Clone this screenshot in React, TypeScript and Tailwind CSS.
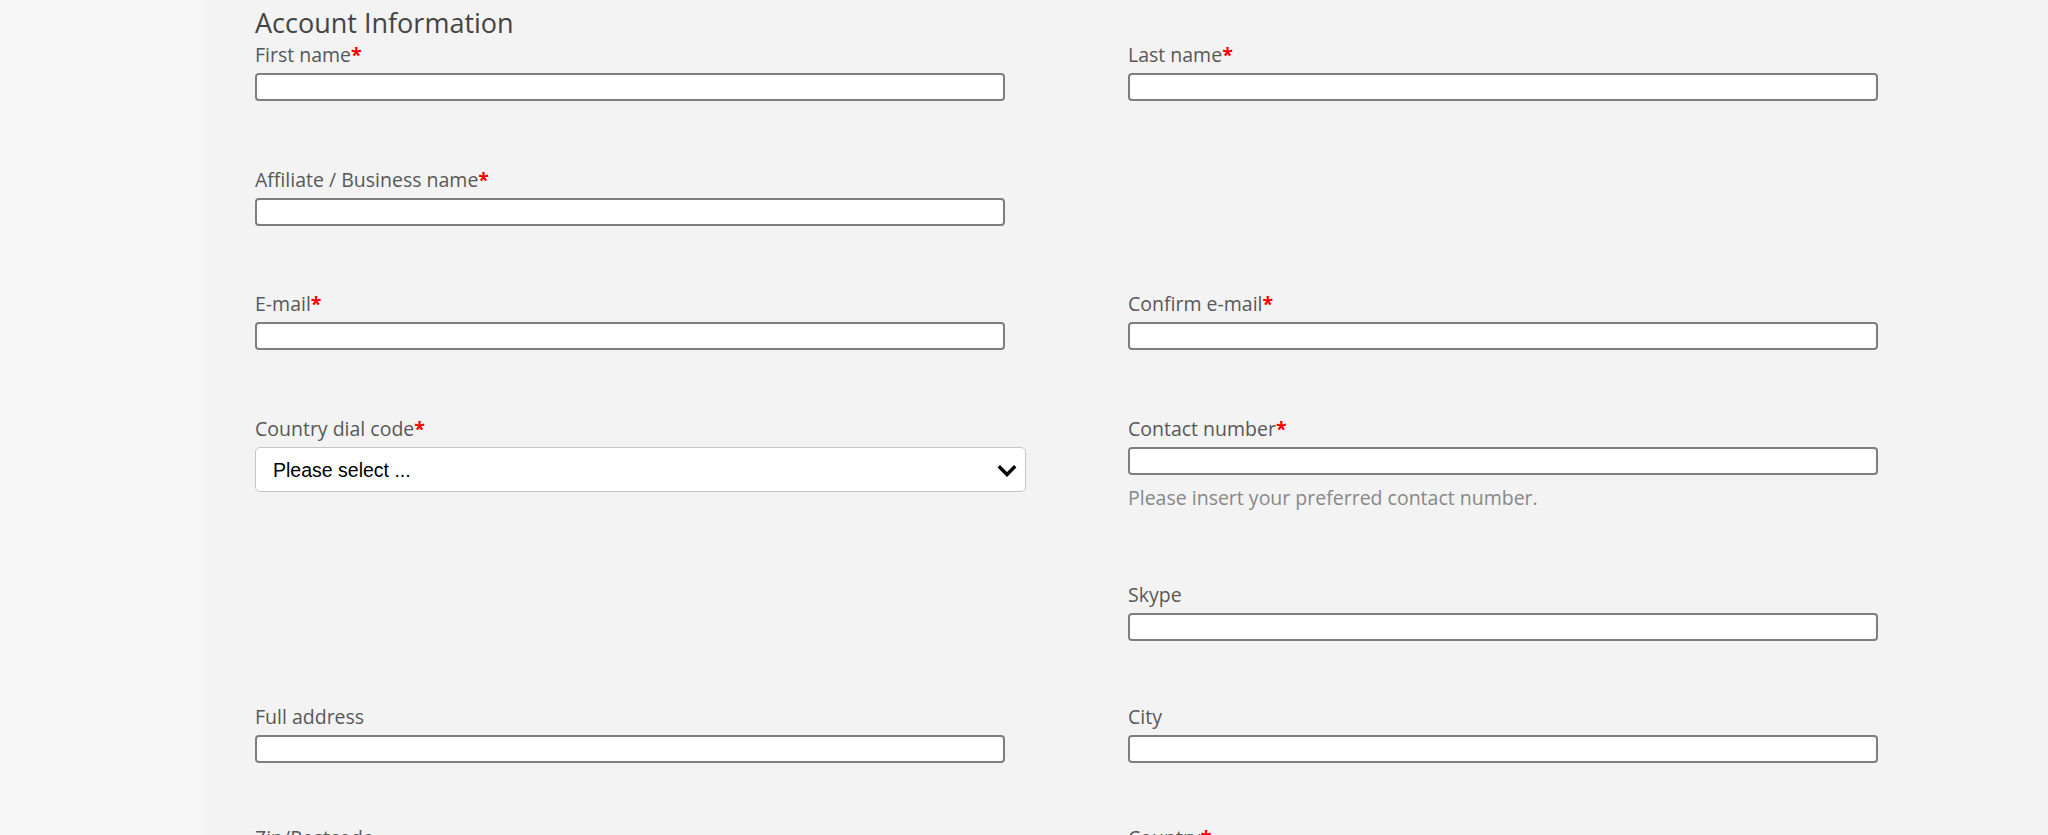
import React from "react";

const font = { fontFamily: '"Open Sans", "Liberation Sans", sans-serif' };

function Label({ text, required }: { text: string; required?: boolean }) {
  return (
    <div className="text-[19.5px] leading-[26px] text-[#585858] mb-[5px] whitespace-nowrap">
      {text}
      {required && <span className="text-[#ff0000] font-bold">*</span>}
    </div>
  );
}

function TextInput() {
  return (
    <input
      type="text"
      className="block w-[750px] h-[28px] bg-white border-2 border-[#7e7e7e] rounded-[4px] outline-none px-2"
    />
  );
}

function Field({ label, required, className }: { label: string; required?: boolean; className?: string }) {
  return (
    <div className={className}>
      <Label text={label} required={required} />
      <TextInput />
    </div>
  );
}

function SelectBox() {
  return (
    <div className="w-[771px] h-[45px] bg-white border-[1.5px] border-[#c6c6c6] rounded-[5px] flex items-center justify-between pl-[17px] pr-[8px] pt-[3px]">
      <span
        className="text-[19.5px] text-black"
        style={{ fontFamily: '"Liberation Sans", Arial, sans-serif' }}
      >
        Please select ...
      </span>
      <svg width="20" height="14" viewBox="0 0 20 14" aria-hidden="true">
        <path d="M3 3.5 L10 10.5 L17 3.5" fill="none" stroke="#000" strokeWidth="3.4" strokeLinecap="square" />
      </svg>
    </div>
  );
}

export default function App() {
  return (
    <div className="w-[2048px] h-[835px] overflow-hidden flex bg-[#f3f3f3]" style={font}>
      <div className="w-[206px] shrink-0 bg-[#f6f6f6]" />
      <div className="flex-1 pl-[49px] pt-[6px]">
        <h2 className="text-[27px] leading-[34px] text-[#444444] mb-[2px]">Account Information</h2>
        <div className="grid grid-cols-[750px_750px] gap-x-[123px] gap-y-[65.5px] items-start">
          <Field label="First name" required />
          <Field label="Last name" required />

          <Field label="Affiliate / Business name" required />
          <div />

          <Field label="E-mail" required />
          <Field label="Confirm e-mail" required />

          <div>
            <Label text="Country dial code" required />
            <SelectBox />
          </div>
          <div className="pb-[6px]">
            <Label text="Contact number" required />
            <TextInput />
            <div className="mt-[10px] text-[19.5px] leading-[26px] text-[#888888]">
              Please insert your preferred contact number.
            </div>
          </div>

          <div />
          <Field label="Skype" />

          <Field label="Full address" className="-mt-[3px]" />
          <Field label="City" className="-mt-[3px]" />

          <Field label="Zip/Postcode" className="-mt-[3px]" />
          <div className="-mt-[3px]">
            <Label text="Country" required />
            <SelectBox />
          </div>
        </div>
      </div>
    </div>
  );
}
